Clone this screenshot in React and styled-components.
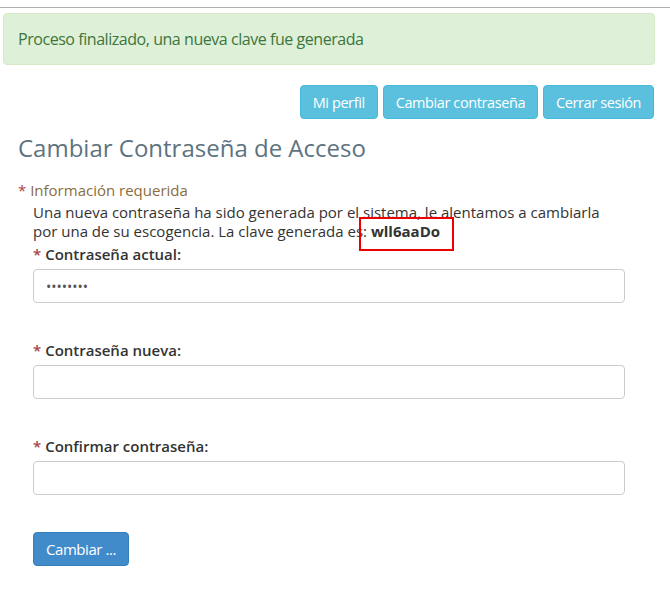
import React from 'react';
import styled, {createGlobalStyle} from 'styled-components';

const Global = createGlobalStyle`
    body {
        margin: 0;
        background: #ffffff;
        font-family: "Open Sans", "Liberation Sans", sans-serif;
        color: #333333;
    }
`

const fields = [
    {label: 'Contraseña actual:', value: '••••••••'},
    {label: 'Contraseña nueva:', value: ''},
    {label: 'Confirmar contraseña:', value: ''},
];

export default function App() {
    return (
        <Page>
            <Global/>
            <TopRule/>
            <Alert>Proceso finalizado, una nueva clave fue generada</Alert>
            <Toolbar>
                <NavButton>Mi perfil</NavButton>
                <NavButton>Cambiar contraseña</NavButton>
                <NavButton>Cerrar sesión</NavButton>
            </Toolbar>
            <Title>Cambiar Contraseña de Acceso</Title>
            <Required><Star>*</Star> Información requerida</Required>
            <Form>
                <Notice>
                    Una nueva contraseña ha sido generada por el sistema, le alentamos a cambiarla
                    por una de su escogencia. La clave generada es: <Key>wll6aaDo<Mark/></Key>
                </Notice>
                {fields.map((f, i) => (
                    <Field key={i} first={i === 0}>
                        <Label><Star>*</Star> {f.label}</Label>
                        <Input type="text" readOnly value={f.value}/>
                    </Field>
                ))}
                <Submit>Cambiar ...</Submit>
            </Form>
        </Page>
    )
}

const Page = styled.div`
    width: 670px;
    height: 610px;
    overflow: hidden;
`
const TopRule = styled.div`
    height: 7px;
    border-bottom: 1px solid #b0b0b0;
`
const Alert = styled.div`
    margin: 5px 15px 0 3px;
    height: 52px;
    box-sizing: border-box;
    padding: 0 14px;
    display: flex;
    align-items: center;
    background: #dff0d8;
    border: 1px solid #d6e9c6;
    border-radius: 4px;
    color: #3c763d;
    font-size: 16px;
    letter-spacing: -0.45px;
`
const Toolbar = styled.div`
    display: flex;
    justify-content: flex-end;
    gap: 5px;
    margin: 20px 16px 0 0;
`
const NavButton = styled.button`
    height: 34px;
    padding: 0 12px;
    border: 1px solid #46b8da;
    border-radius: 4px;
    background: #5bc0de;
    color: #ffffff;
    font-family: "Open Sans", "Liberation Sans", sans-serif;
    font-size: 14.5px;
    letter-spacing: -0.4px;
`
const Title = styled.h1`
    margin: 13px 0 0 18px;
    font-size: 24px;
    font-weight: 400;
    line-height: 32px;
    color: #5d7380;
`
const Required = styled.div`
    margin: 16px 0 0 18px;
    font-size: 15px;
    line-height: 20px;
    color: #8a6d3b;
`
const Star = styled.span`
    color: #a94442;
`
const Form = styled.div`
    margin: 0 45px 0 33px;
`
const Notice = styled.p`
    margin: 3px 0 0;
    font-size: 15px;
    line-height: 19px;
    color: #333333;
`
const Key = styled.span`
    position: relative;
    font-weight: 700;
    color: #333333;
`
const Mark = styled.span`
    position: absolute;
    left: -12px;
    right: -14px;
    top: -4px;
    bottom: -10px;
    border: 2px solid #ee0000;
`
const Field = styled.div`
    margin-top: ${p => p.first ? '3px' : '37px'};
`
const Label = styled.div`
    font-size: 15px;
    font-weight: 600;
    line-height: 20px;
    margin-bottom: 5px;
    color: #333333;
`
const Input = styled.input`
    display: block;
    width: 100%;
    height: 34px;
    box-sizing: border-box;
    padding: 0 12px;
    border: 1px solid #cccccc;
    border-radius: 4px;
    font-family: "Open Sans", "Liberation Sans", sans-serif;
    font-size: 14px;
    color: #555555;
    outline: none;
`
const Submit = styled.button`
    display: block;
    margin-top: 37px;
    height: 34px;
    padding: 0 12px;
    border: 1px solid #357ebd;
    border-radius: 4px;
    background: #428bca;
    color: #ffffff;
    font-family: "Open Sans", "Liberation Sans", sans-serif;
    font-size: 15px;
    letter-spacing: -0.45px;
`
